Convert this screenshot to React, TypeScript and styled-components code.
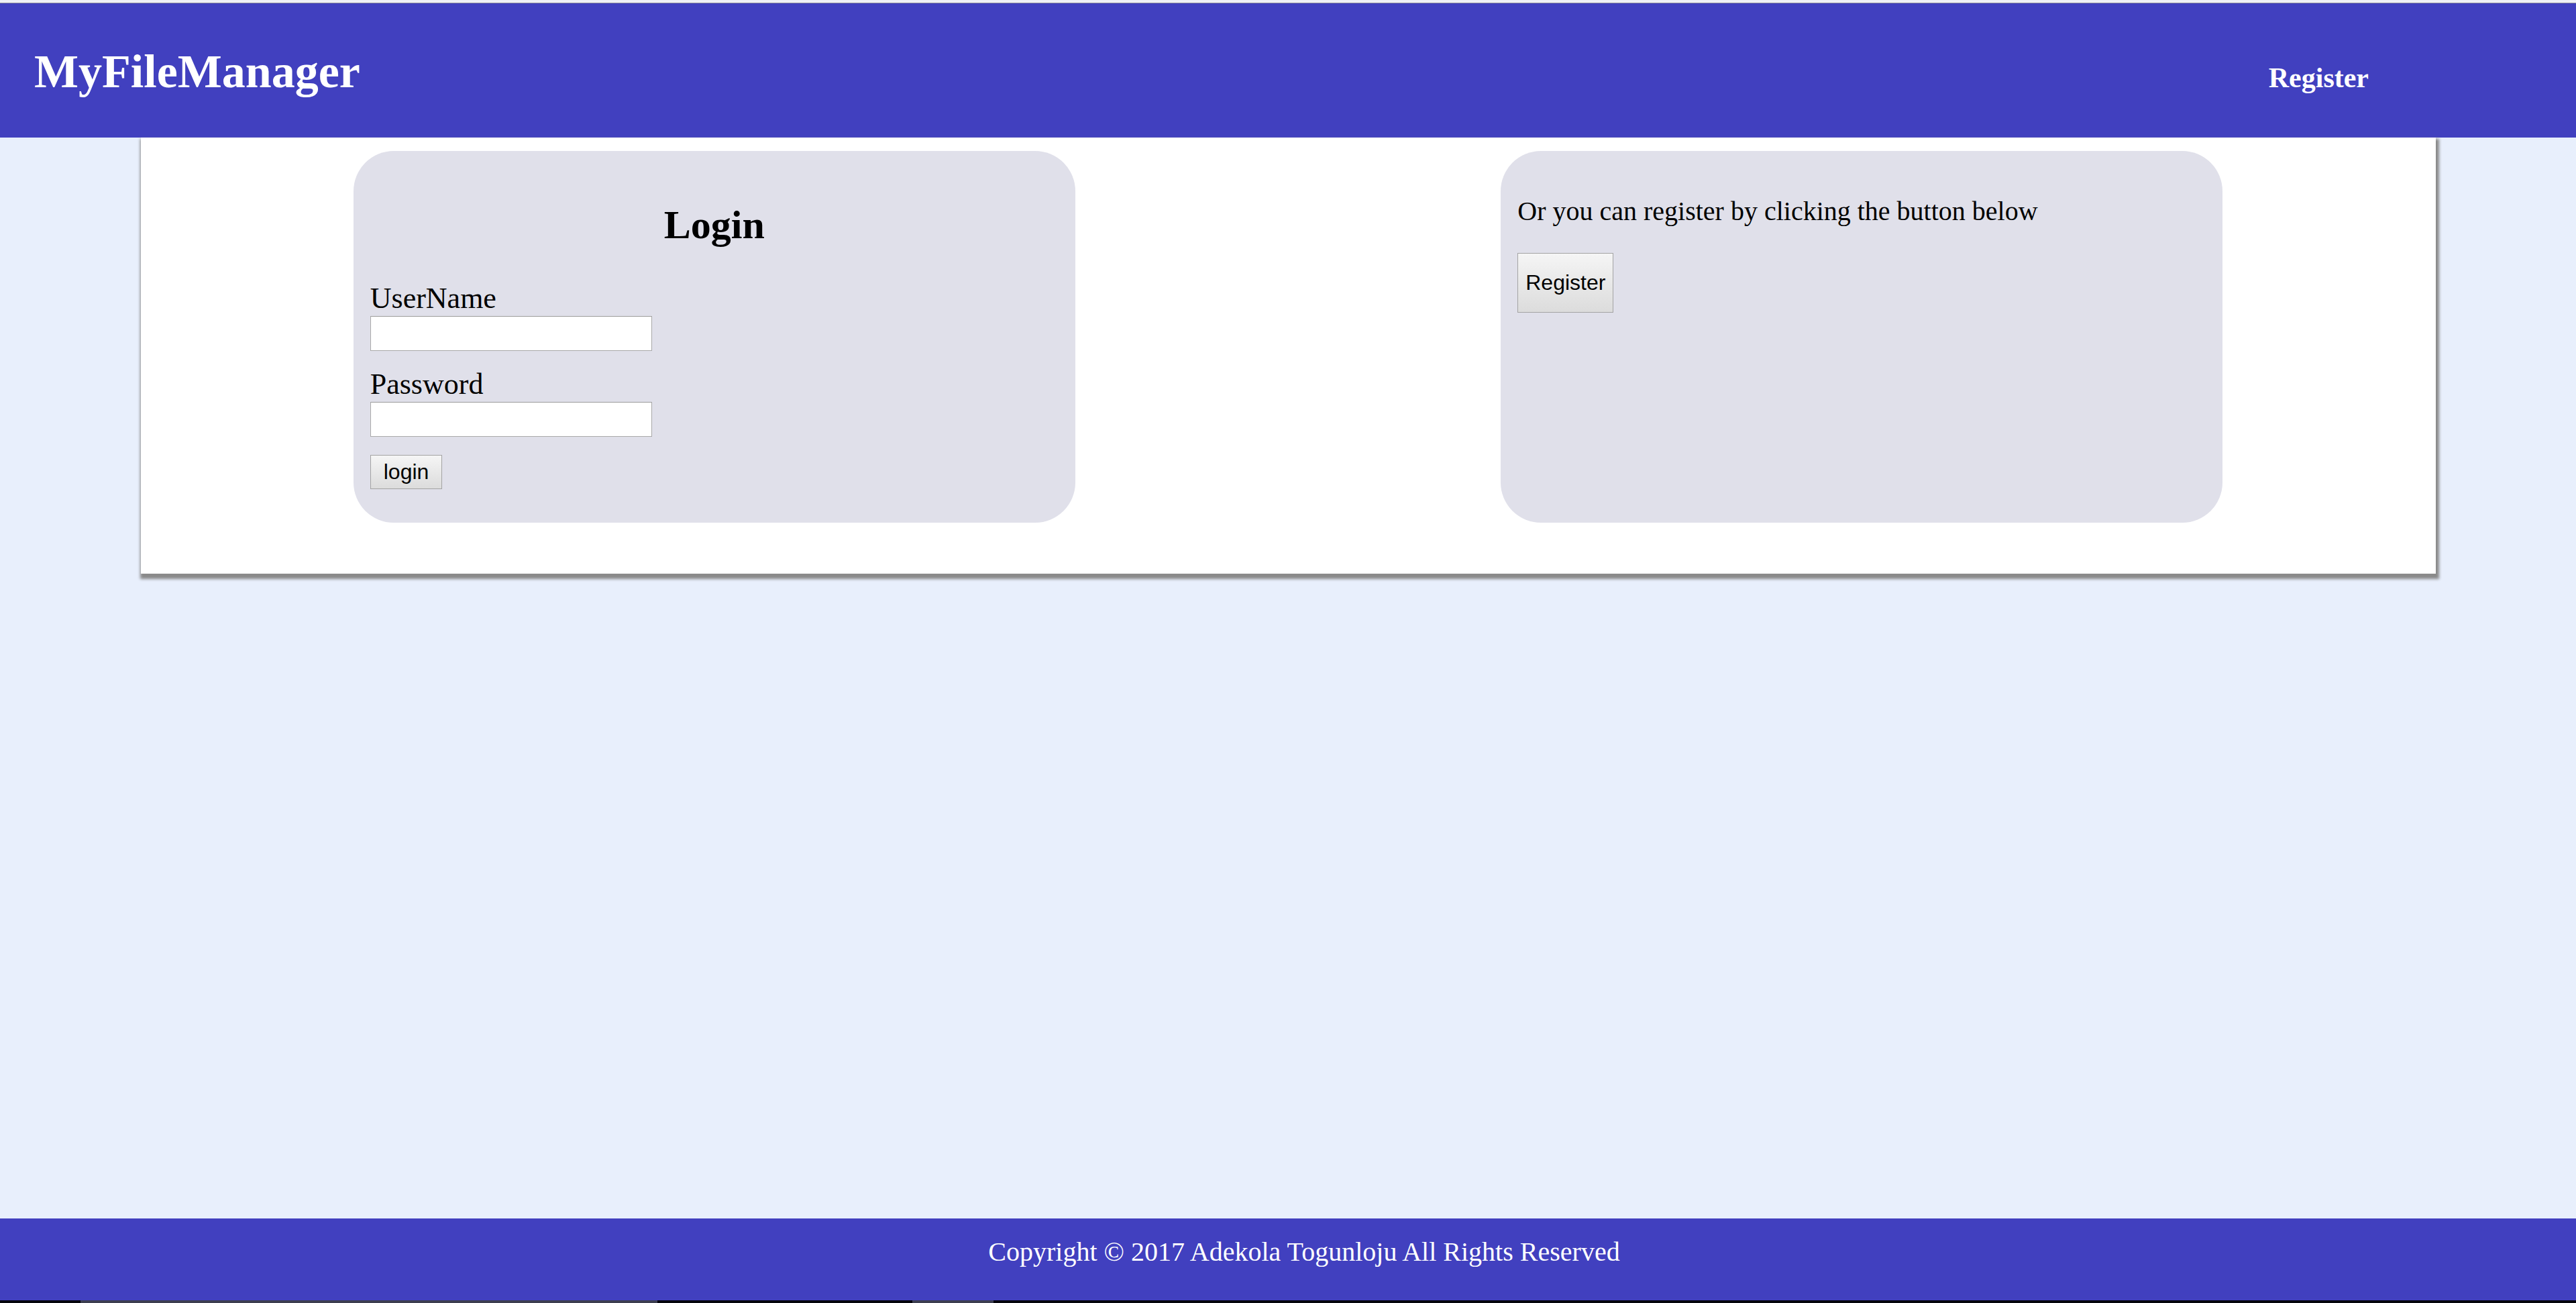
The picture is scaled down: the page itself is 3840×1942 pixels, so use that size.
import React from "react";
import styled, { createGlobalStyle } from "styled-components";

const GlobalStyle = createGlobalStyle`
  html, body {
    margin: 0;
    padding: 0;
    background: #e8effc;
  }
  body {
    font-family: "Liberation Serif", "Times New Roman", serif;
    color: #000;
  }
  * { box-sizing: border-box; }
`;

const Page = styled.div`
  min-height: 100vh;
  display: flex;
  flex-direction: column;
`;

const TopStrip = styled.div`
  height: 5px;
  background: #f0f1f5;
  border-bottom: 1px solid #8c8d99;
`;

const Header = styled.header`
  height: 200px;
  background: #4140bf;
  display: flex;
  align-items: baseline;
  justify-content: space-between;
  padding: 62px 309px 0 51px;
`;

const Logo = styled.h1`
  margin: 0;
  font-size: 70px;
  font-weight: bold;
  color: #fff;
  line-height: normal;
`;

const NavLink = styled.a`
  font-size: 42px;
  font-weight: bold;
  color: #fff;
  text-decoration: none;
`;

const Main = styled.main`
  flex: 1;
  display: flex;
  flex-direction: column;
  align-items: center;
`;

const Container = styled.div`
  width: 3421px;
  background: #fff;
  box-shadow: 2px 5px 4px 3px #8a8a8a;
  display: grid;
  grid-template-columns: 1fr 1fr;
  padding: 20px 0 76px;
`;

const Column = styled.div`
  display: flex;
  justify-content: center;
`;

const Card = styled.section`
  width: 1076px;
  background: #e0e0ea;
  border-radius: 60px;
  padding: 25px 25px 50px;
  display: flex;
  flex-direction: column;
  align-items: flex-start;
`;

const Title = styled.h2`
  align-self: stretch;
  text-align: center;
  font-size: 60px;
  font-weight: bold;
  line-height: 67px;
  margin: 52px 0 51px;
`;

const Label = styled.label<{ $first?: boolean }>`
  display: block;
  font-size: 44px;
  line-height: 49px;
  margin-top: ${(p) => (p.$first ? "0" : "25px")};
`;

const Input = styled.input`
  display: block;
  width: 420px;
  height: 52px;
  margin-top: 2px;
  background: #fff;
  border: 1px solid #a9a9a9;
  border-top-color: #9a9a9a;
  padding: 0 6px;
  font-size: 28px;
  outline: none;
`;

const Button = styled.button<{ $large?: boolean }>`
  font-family: "Liberation Sans", Arial, sans-serif;
  font-size: 32px;
  line-height: 37px;
  color: #000;
  border: 1px solid #a3a3a3;
  border-radius: 0;
  background: linear-gradient(#f5f5f5, #dcdcdc);
  padding: ${(p) => (p.$large ? "25px 11px" : "6px 19px")};
  margin-top: ${(p) => (p.$large ? "0" : "27px")};
  cursor: pointer;
`;

const Text = styled.p`
  font-size: 40px;
  line-height: 44px;
  margin: 43px 0 40px;
`;

const Footer = styled.footer`
  height: 122px;
  background: #4140bf;
  color: #fff;
  font-size: 40px;
  text-align: center;
  padding: 26px 0 0 48px;
`;

const Taskbar = styled.div`
  height: 4px;
  background: #05050d;
  display: flex;
`;

const TaskSegment = styled.div<{ $w: number; $active?: boolean }>`
  width: ${(p) => p.$w}px;
  background: ${(p) => (p.$active ? "#3c3e50" : "transparent")};
`;

export default function App() {
  return (
    <>
      <GlobalStyle />
      <Page>
        <TopStrip />
        <Header>
          <Logo>MyFileManager</Logo>
          <NavLink href="#">Register</NavLink>
        </Header>
        <Main>
          <Container>
            <Column>
              <Card>
                <Title>Login</Title>
                <Label $first>UserName</Label>
                <Input type="text" />
                <Label>Password</Label>
                <Input type="password" />
                <Button>login</Button>
              </Card>
            </Column>
            <Column>
              <Card>
                <Text>Or you can register by clicking the button below</Text>
                <Button $large>Register</Button>
              </Card>
            </Column>
          </Container>
        </Main>
        <Footer>Copyright © 2017 Adekola Togunloju All Rights Reserved</Footer>
        <Taskbar>
          <TaskSegment $w={120} />
          <TaskSegment $w={860} $active />
          <TaskSegment $w={380} />
          <TaskSegment $w={121} $active />
        </Taskbar>
      </Page>
    </>
  );
}
